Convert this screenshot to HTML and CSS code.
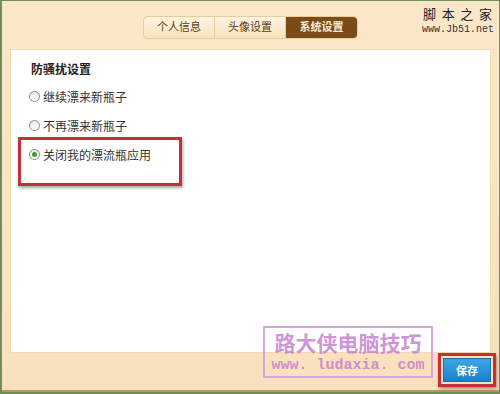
FILE: index.html
```html
<!DOCTYPE html>
<html lang="zh-CN">

<head>
    <meta charset="UTF-8">
    <title>系统设置</title>
    <link rel="stylesheet" href="styles.css">
</head>

<body>
    <div class="window">
        <div class="top">
            <ul class="tabs">
                <li class="tab">个人信息</li>
                <li class="tab">头像设置</li>
                <li class="tab active">系统设置</li>
            </ul>
            <div class="site-logo">
                <p class="logo-name">脚 本 之 家</p>
                <p class="logo-url">www.Jb51.net</p>
            </div>
        </div>

        <div class="panel">
            <h3>防骚扰设置</h3>
            <div class="option"><span class="radio"></span>继续漂来新瓶子</div>
            <div class="option"><span class="radio"></span>不再漂来新瓶子</div>
            <div class="option marked"><span class="radio checked"></span>关闭我的漂流瓶应用</div>
        </div>

        <div class="footer">
            <div class="watermark">
                <p class="wm-title">路大侠电脑技巧</p>
                <p class="wm-url">www. ludaxia. com</p>
            </div>
            <div class="save-wrap">
                <button class="save">保存</button>
            </div>
        </div>
    </div>
</body>

</html>
```

FILE: styles.css
```css
* {
    box-sizing: border-box;
}

body {
    margin: 0;
    background-color: #6d8f5e;
    font-family: "Liberation Sans", "Noto Sans CJK SC", sans-serif;
    font-size: 12px;
    color: #222;
}

.window {
    position: relative;
    width: 497px;
    height: 391px;
    margin-left: 2px;
    margin-top: 1px;
    background: linear-gradient(#fbe7c8, #fae1bd);
    border-bottom: 2px solid #b9985a;
    display: flex;
    flex-direction: column;
}

.top {
    height: 48px;
    display: flex;
    justify-content: center;
    padding-top: 15px;
}

.tabs {
    display: flex;
    list-style: none;
    margin: 0;
    padding: 0;
    height: 23px;
    border: 1px solid #e7cc9c;
    border-radius: 4px;
    background: linear-gradient(#fef4e2, #f8e2bc);
}

.tab {
    width: 71px;
    line-height: 21px;
    text-align: center;
    font-size: 11px;
    color: #5a3e1b;
    border-right: 1px solid #e7cc9c;
}

.tab.active {
    background-color: #7b4b17;
    color: #f6ead5;
    font-weight: bold;
    border-right: none;
    border-radius: 0 4px 4px 0;
}

.site-logo {
    position: absolute;
    top: 3px;
    right: 5px;
    text-align: center;
}

.site-logo p {
    margin: 0;
}

.logo-name {
    font-size: 13px;
    letter-spacing: 1px;
    color: #222;
}

.logo-url {
    font-family: "Liberation Mono", monospace;
    font-size: 10px;
    color: #333;
    margin-top: 1px !important;
}

.panel {
    margin: 0 8px;
    height: 304px;
    background-color: #fff;
    border: 1px solid #f2dcb6;
    padding: 10px 0 0 18px;
}

.panel h3 {
    margin: 0 0 5px 2px;
    font-size: 12px;
    font-weight: bold;
}

.option {
    position: relative;
    display: flex;
    align-items: center;
    height: 29px;
    font-size: 12px;
    color: #333;
}

.radio {
    width: 11px;
    height: 11px;
    border: 1px solid #8c8c8c;
    border-radius: 50%;
    margin-right: 3px;
    background: linear-gradient(#e6e6e6, #fff);
    display: flex;
    align-items: center;
    justify-content: center;
}

.radio.checked::after {
    content: "";
    width: 5px;
    height: 5px;
    border-radius: 50%;
    background-color: #3a9a3a;
}

.option.marked::before {
    content: "";
    position: absolute;
    left: -11px;
    top: -3px;
    width: 158px;
    height: 43px;
    border: 3px solid #c4303a;
    box-shadow: 1px 2px 3px rgba(0, 0, 0, 0.35);
}

.footer {
    position: relative;
    flex: 1;
    display: flex;
    justify-content: flex-end;
    align-items: flex-start;
    padding: 0 3px 0 0;
}

.watermark {
    position: absolute;
    left: 261px;
    top: -27px;
    width: 170px;
    height: 52px;
    border: 2px solid #d6a6dc;
    text-align: center;
    overflow: hidden;
}

.watermark p {
    margin: 0;
    white-space: nowrap;
}

.wm-title {
    font-family: "Noto Sans CJK SC", sans-serif;
    font-size: 21px;
    font-weight: bold;
    line-height: 28px;
    height: 28px;
    color: rgba(196, 120, 206, 0.8);
}

.wm-url {
    font-family: "Liberation Mono", monospace;
    font-size: 15px;
    font-weight: bold;
    line-height: 19px;
    color: rgba(196, 120, 206, 0.8);
}

.save-wrap {
    border: 3px solid #c4303a;
    padding: 2px;
    box-shadow: 1px 2px 3px rgba(0, 0, 0, 0.35);
}

.save {
    display: block;
    width: 48px;
    height: 24px;
    border: 1px solid #1f6da8;
    background: linear-gradient(#3aa8e6, #1a80c8);
    color: #fff;
    font-family: "Noto Sans CJK SC", sans-serif;
    font-size: 11px;
    font-weight: bold;
    padding: 0;
}
```
